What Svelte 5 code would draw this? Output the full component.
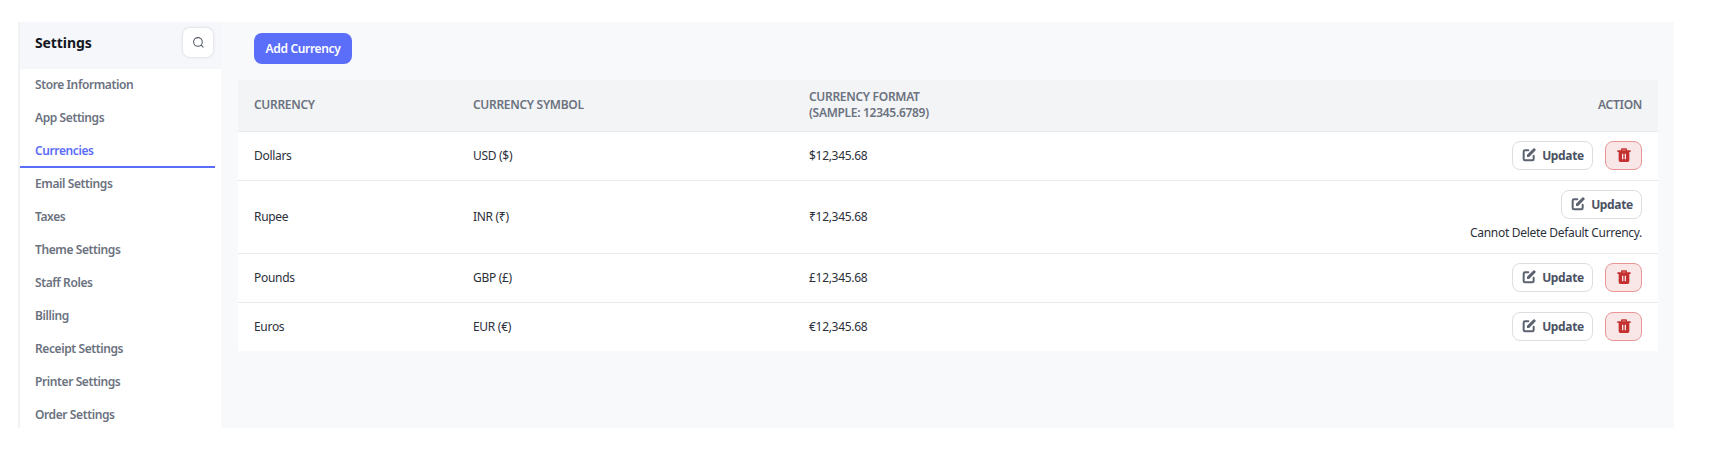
<script>
  const links = ['Store Information', 'App Settings', 'Currencies', 'Email Settings', 'Taxes', 'Theme Settings', 'Staff Roles', 'Billing', 'Receipt Settings', 'Printer Settings', 'Order Settings'];
  const active = 'Currencies';

  const currencies = [
    { name: 'Dollars', symbol: 'USD ($)', format: '$12,345.68', canDelete: true },
    { name: 'Rupee', symbol: 'INR (₹)', format: '₹12,345.68', canDelete: false },
    { name: 'Pounds', symbol: 'GBP (£)', format: '£12,345.68', canDelete: true },
    { name: 'Euros', symbol: 'EUR (€)', format: '€12,345.68', canDelete: true }
  ];
</script>

<div class="page">
  <aside class="sidebar">
    <div class="side-head">
      <h1>Settings</h1>
      <button class="search" aria-label="Search">
        <svg width="13" height="13" viewBox="0 0 24 24" fill="none" stroke="#555b66" stroke-width="2" stroke-linecap="round">
          <circle cx="11" cy="11" r="8" />
          <path d="M20.5 20.5 17 17" />
        </svg>
      </button>
    </div>
    <nav>
      {#each links as link}
        <a href="#top" class:active={link === active}>{link}</a>
      {/each}
    </nav>
  </aside>

  <main>
    <button class="add">Add Currency</button>
    <table>
      <colgroup>
        <col class="c1" />
        <col class="c2" />
        <col />
        <col />
      </colgroup>
      <thead>
        <tr>
          <th>Currency</th>
          <th>Currency Symbol</th>
          <th>Currency Format<br />(Sample: 12345.6789)</th>
          <th class="right">Action</th>
        </tr>
      </thead>
      <tbody>
        {#each currencies as c}
          <tr>
            <td>{c.name}</td>
            <td>{c.symbol}</td>
            <td>{c.format}</td>
            <td class="right">
              <div class="actions">
                <button class="update">
                  <svg width="16" height="16" viewBox="0 0 24 24" fill="none">
                    <path d="M11 5H6a2 2 0 0 0-2 2v11a2 2 0 0 0 2 2h11a2 2 0 0 0 2-2v-5" stroke="#5b6270" stroke-width="3" stroke-linecap="round" />
                    <path d="M9 15v-3.200L18.600 2.300a1.400 1.400 0 0 1 2 0l1.100 1.100a1.400 1.400 0 0 1 0 2L12.200 15Z" fill="#5b6270" />
                  </svg>
                  Update
                </button>
                {#if c.canDelete}
                  <button class="delete" aria-label="Delete">
                    <svg width="16" height="16" viewBox="0 0 24 24" fill="#c42f2f">
                      <path fill-rule="evenodd" d="M9 2h6a1.500 1.500 0 0 1 1.500 1.500V5H21a1 1 0 0 1 0 2.400h-1V20a2.500 2.500 0 0 1-2.500 2.500H6.500A2.500 2.500 0 0 1 4 20V7.400H3A1 1 0 0 1 3 5h4.500V3.500A1.500 1.500 0 0 1 9 2Zm.5 2v1h5V4ZM9 10v8.500h2V10Zm4 0v8.500h2V10Z" />
                    </svg>
                  </button>
                {/if}
              </div>
              {#if !c.canDelete}
                <div class="note">Cannot Delete Default Currency.</div>
              {/if}
            </td>
          </tr>
        {/each}
      </tbody>
    </table>
  </main>
</div>

<style>
  :global(body) {
    margin: 0;
    background: #fff;
  }
  .page {
    display: flex;
    height: 406px;
    margin: 22px 38px 26px 18px;
    overflow: hidden;
    background: #f8f9fb;
    font-family: "Noto Sans", sans-serif;
    font-size: 12px;
    letter-spacing: -0.3px;
    color: #2b303a;
  }
  .sidebar {
    flex: none;
    width: 201px;
    border-left: 2px solid #f1f2f4;
    background: #fff;
  }
  .side-head {
    display: flex;
    align-items: center;
    justify-content: space-between;
    height: 47px;
    box-sizing: border-box;
    padding: 0 8px 6px 15px;
    background: #f6f7fb;
  }
  h1 {
    margin: 0;
    font-size: 14px;
    font-weight: 700;
    letter-spacing: -0.1px;
    color: #14171f;
  }
  .search {
    display: flex;
    align-items: center;
    justify-content: center;
    width: 30px;
    height: 29px;
    padding: 0;
    border: 0;
    border-radius: 7px;
    background: #fff;
    box-shadow: 0 0 3px rgba(30, 40, 60, 0.18);
  }
  nav {
    width: 195px;
  }
  nav a {
    display: block;
    height: 33px;
    box-sizing: border-box;
    padding: 7px 15px 0;
    border-bottom: 2px solid transparent;
    font-weight: 600;
    letter-spacing: -0.4px;
    line-height: 17px;
    color: #6b7280;
    text-decoration: none;
  }
  nav a.active {
    color: #5b6cf9;
    border-bottom-color: #5b6cf9;
  }
  main {
    flex: 1;
    padding: 11px 16px 0 17px;
  }
  .add {
    display: block;
    width: 98px;
    height: 31px;
    margin: 0 0 16px 16px;
    padding: 0;
    border: 0;
    border-radius: 8px;
    background: #5b6ef9;
    color: #fff;
    font: 600 12px "Noto Sans", sans-serif;
    letter-spacing: -0.35px;
  }
  table {
    width: 100%;
    border-collapse: collapse;
    table-layout: fixed;
    background: #fff;
  }
  .c1 {
    width: 219px;
  }
  .c2 {
    width: 336px;
  }
  th {
    height: 51px;
    box-sizing: border-box;
    padding: 0 16px;
    background: #f3f4f6;
    border-bottom: 1px solid #e8e9ec;
    text-align: left;
    text-transform: uppercase;
    font-weight: 600;
    line-height: 16px;
    color: #6b7280;
  }
  td {
    box-sizing: border-box;
    padding: 9px 16px 10px;
    border-bottom: 1px solid #e8e9ec;
  }
  tr:last-child td {
    border-bottom: 0;
  }
  th.right,
  td.right {
    text-align: right;
  }
  .actions {
    display: flex;
    justify-content: flex-end;
    gap: 12px;
  }
  .update,
  .delete {
    display: flex;
    align-items: center;
    justify-content: center;
    height: 29px;
    box-sizing: border-box;
    padding: 0;
    border-radius: 8px;
  }
  .update {
    gap: 5px;
    width: 81px;
    border: 1px solid #dcdee3;
    background: #fff;
    color: #4b5263;
    font: 700 12px "Noto Sans", sans-serif;
    letter-spacing: -0.35px;
  }
  .delete {
    width: 37px;
    border: 1px solid #e99595;
    background: #f9e6e6;
  }
  .note {
    margin-top: 6px;
    margin-bottom: 2px;
    line-height: 16px;
  }
</style>
